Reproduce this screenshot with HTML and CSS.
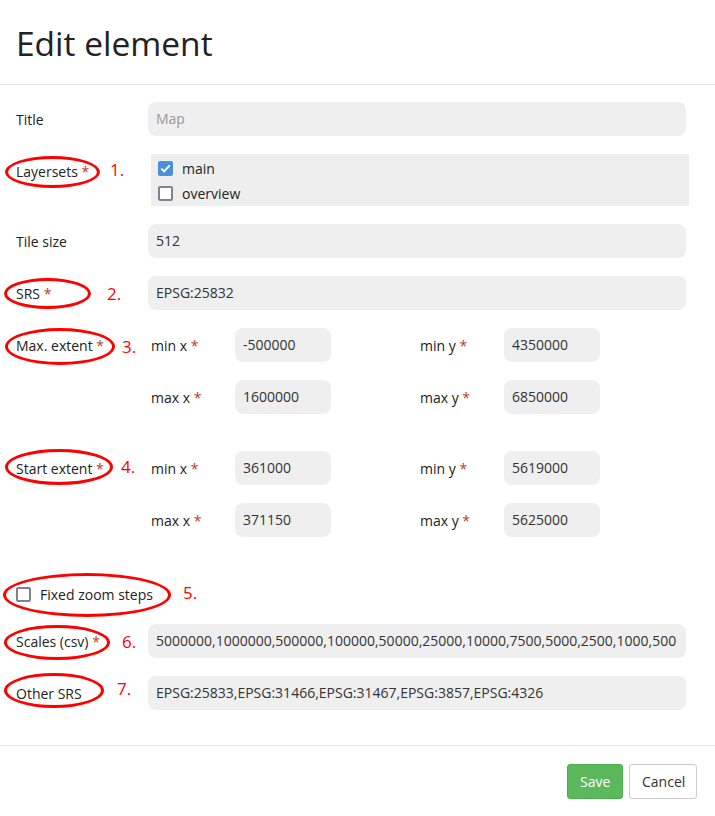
FILE: index.html
```html
<!DOCTYPE html>
<html>
<head>
<meta charset="utf-8">
<link rel="stylesheet" href="styles.css">
</head>
<body>
<div class="modal">
  <div class="header"><h1>Edit element</h1></div>
  <div class="body">
    <div class="row r-title">
      <label class="lbl">Title</label>
      <div class="field"><div class="input placeholder">Map</div></div>
    </div>
    <div class="row r-layersets">
      <label class="lbl">Layersets <span class="req">*</span></label>
      <div class="field">
        <div class="checks">
          <div class="check"><span class="cb on"><svg viewBox="0 0 15 15" width="15" height="15"><path d="M3.3 7.6 L6.2 10.4 L11.7 4.3" fill="none" stroke="#fff" stroke-width="2"/></svg></span>main</div>
          <div class="check"><span class="cb"></span>overview</div>
        </div>
      </div>
      <span class="ell e1"></span><span class="num n1">1.</span>
    </div>
    <div class="row r-tile">
      <label class="lbl">Tile size</label>
      <div class="field"><div class="input">512</div></div>
    </div>
    <div class="row r-srs">
      <label class="lbl">SRS <span class="req">*</span></label>
      <div class="field"><div class="input">EPSG:25832</div></div>
      <span class="ell e2"></span><span class="num n2">2.</span>
    </div>
    <div class="row r-ext">
      <label class="lbl">Max. extent <span class="req">*</span></label>
      <div class="extent">
        <div class="cell"><span class="sub">min x <span class="req">*</span></span><div class="input small">-500000</div></div>
        <div class="cell"><span class="sub">min y <span class="req">*</span></span><div class="input small">4350000</div></div>
        <div class="cell"><span class="sub">max x <span class="req">*</span></span><div class="input small">1600000</div></div>
        <div class="cell"><span class="sub">max y <span class="req">*</span></span><div class="input small">6850000</div></div>
      </div>
      <span class="ell e3"></span><span class="num n3">3.</span>
    </div>
    <div class="row r-ext">
      <label class="lbl">Start extent <span class="req">*</span></label>
      <div class="extent">
        <div class="cell"><span class="sub">min x <span class="req">*</span></span><div class="input small">361000</div></div>
        <div class="cell"><span class="sub">min y <span class="req">*</span></span><div class="input small">5619000</div></div>
        <div class="cell"><span class="sub">max x <span class="req">*</span></span><div class="input small">371150</div></div>
        <div class="cell"><span class="sub">max y <span class="req">*</span></span><div class="input small">5625000</div></div>
      </div>
      <span class="ell e4"></span><span class="num n4">4.</span>
    </div>
    <div class="row r-fixed">
      <div class="check solo"><span class="cb"></span>Fixed zoom steps</div>
      <span class="ell e5"></span><span class="num n5">5.</span>
    </div>
    <div class="row r-scales">
      <label class="lbl">Scales (csv) <span class="req">*</span></label>
      <div class="field"><div class="input">5000000,1000000,500000,100000,50000,25000,10000,7500,5000,2500,1000,500</div></div>
      <span class="ell e6"></span><span class="num n6">6.</span>
    </div>
    <div class="row r-other">
      <label class="lbl">Other SRS</label>
      <div class="field"><div class="input">EPSG:25833,EPSG:31466,EPSG:31467,EPSG:3857,EPSG:4326</div></div>
      <span class="ell e7"></span><span class="num n7">7.</span>
    </div>
  </div>
  <div class="footer">
    <button class="btn save">Save</button>
    <button class="btn cancel">Cancel</button>
  </div>
</div>
</body>
</html>
```
FILE: styles.css
```css
* { box-sizing: border-box; }
html, body { margin: 0; padding: 0; background: #fff; }
body {
  font-family: "Open Sans", "Noto Sans", sans-serif;
  font-size: 14px;
  color: #222;
}
.modal { width: 715px; height: 816px; }
.header {
  height: 85px;
  border-bottom: 1px solid #e5e5e5;
  padding: 21px 16px 0;
}
.header h1 {
  margin: 0;
  font-weight: 400;
  font-size: 33.5px;
  line-height: 44px;
  color: #222;
}
.body {
  padding: 17px 29px 0 16px;
  height: 661px;
  border-bottom: 1px solid #e5e5e5;
}
.row {
  position: relative;
  display: flex;
  align-items: flex-start;
  margin-bottom: 18px;
}
.lbl {
  width: 132px;
  height: 34px;
  flex: none;
  line-height: 34px;
  padding-top: 1px;
  color: #222;
}
.req { color: #c0392b; }
.field { flex: 1; }
.input {
  height: 34px;
  line-height: 34px;
  background: #efefef;
  border-radius: 8px;
  padding: 0 8px;
  color: #333;
  white-space: nowrap;
  overflow: hidden;
}
.input.placeholder { color: #999; }
.checks {
  margin-left: 3px;
  margin-right: -3px;
  height: 52px;
  background: #eeeeee;
  padding: 2px 7px 0;
}
.check {
  display: flex;
  align-items: center;
  height: 25px;
  color: #222;
}
.cb {
  width: 15px;
  height: 15px;
  flex: none;
  border: 2px solid #80808f;
  border-radius: 2px;
  margin-right: 9px;
  background: #fff;
  display: flex;
}
.cb.on { background: #4a90d9; border: none; }
.extent {
  flex: 1;
  padding-left: 3px;
  display: grid;
  grid-template-columns: 269px 269px;
  row-gap: 18px;
  margin-bottom: 19px;
}
.cell { display: flex; align-items: center; }
.sub { width: 84px; flex: none; }
.input.small { width: 96px; }
.r-fixed { height: 40px; margin-bottom: 10px; align-items: center; }
.check.solo { height: 40px; }
.footer {
  display: flex;
  justify-content: flex-end;
  gap: 6px;
  padding: 18px 18px 0;
}
.btn {
  font-family: inherit;
  font-size: 14px;
  height: 35px;
  border-radius: 3px;
  padding: 0 12px;
  cursor: pointer;
}
.save { width: 56px; background: #5cb85c; border: 1px solid #4cae4c; color: #fff; }
.cancel { width: 68px; background: #fff; border: 1px solid #ccc; color: #333; }

/* annotations */
.ell {
  position: absolute;
  border: 3px solid #f00;
  border-radius: 50%;
  pointer-events: none;
}
.num {
  position: absolute;
  color: #f00;
  font-size: 17px;
  line-height: 20px;
}
.e1 { left: -11px; top: 2px; width: 95px; height: 32px; }
.n1 { left: 94px; top: 6px; }
.e2 { left: -12px; top: 2px; width: 87px; height: 31px; }
.n2 { left: 91px; top: 8px; }
.e3 { left: -11px; top: 0; width: 110px; height: 37px; }
.n3 { left: 106px; top: 9px; }
.e4 { left: -11px; top: -2px; width: 108px; height: 36px; }
.n4 { left: 105px; top: 6px; }
.e5 { left: -13px; top: -1px; width: 168px; height: 44px; }
.n5 { left: 167px; top: 9px; }
.e6 { left: -12px; top: 1px; width: 106px; height: 35px; }
.n6 { left: 106px; top: 8px; }
.e7 { left: -12px; top: -3px; width: 100px; height: 35px; }
.n7 { left: 101px; top: 3px; }
```
